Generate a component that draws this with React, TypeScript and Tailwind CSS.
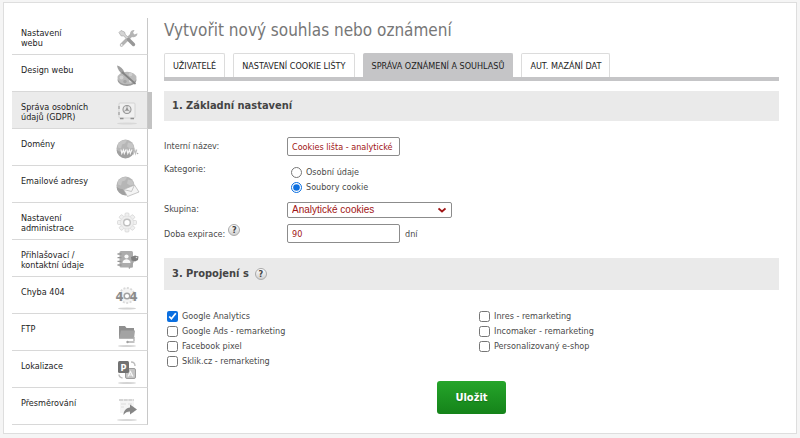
import { useState, type FormEvent, type ReactNode } from 'react';

function ToolsIcon() {
  return (
    <svg width="28" height="26" viewBox="0 0 28 26">
      <path d="M8.500 19 19 8.500" stroke="#b3b3b3" strokeWidth="3.400" strokeLinecap="round" />
      <path d="M17 7.500a4 4 0 0 1 4.500-3.500l-1.500 3 1.500 1.500 3-1.200a4 4 0 0 1-5.500 3.700z" fill="#b5b5b5" />
      <path d="M6 6.500 8 4.500l3.500 1.500.8 2.500 3.200 3.200-1.500 1.500-3.300-3.200L8 9.800z" fill="#d4d4d4" stroke="#a8a8a8" strokeWidth=".7" />
      <path d="m15.500 13.500 5 5" stroke="#989898" strokeWidth="3.400" strokeLinecap="round" />
      <circle cx="8.600" cy="18.900" r="1" fill="#eee" />
    </svg>
  );
}

function PaletteIcon() {
  return (
    <svg width="28" height="26" viewBox="0 0 28 26">
      <ellipse cx="14" cy="17" rx="9.500" ry="6" fill="#9a9a9a" />
      <ellipse cx="14" cy="15" rx="9.500" ry="6.300" fill="#bababa" />
      <circle cx="8.500" cy="14.500" r="1.900" fill="#d2d2d2" />
      <circle cx="12" cy="18.500" r="1.700" fill="#a4a4a4" />
      <circle cx="17.500" cy="11.500" r="1.800" fill="#cfcfcf" />
      <circle cx="17.500" cy="18" r="1.600" fill="#dadada" />
      <path d="M4 2.500c3 .8 6 3 7.500 7L9 11C6.500 9 4.500 6 4 2.500z" fill="#a0a0a0" />
      <path d="m9.500 9.500 12.500 11" stroke="#848484" strokeWidth="1.800" strokeLinecap="round" />
    </svg>
  );
}

function SafeIcon() {
  return (
    <svg width="28" height="26" viewBox="0 0 28 26">
      <rect x="6" y="3" width="16" height="15" rx="1" fill="#f0f0f0" stroke="#cdcdcd" strokeWidth=".8" />
      <path d="M6 6v3M6 12v3" stroke="#a5a5a5" strokeWidth="1.300" />
      <circle cx="14" cy="9.500" r="4" fill="#e6e6e6" stroke="#969696" strokeWidth="1.100" />
      <circle cx="14" cy="9.500" r="1.200" fill="#8a8a8a" />
      <path d="M14 9.500V6M14 9.500l-3 2M14 9.500l3 2" stroke="#969696" strokeWidth=".8" />
      <path d="M7 18.500h3.500M17.500 18.500H21" stroke="#8f8f8f" strokeWidth="1.300" />
      <ellipse cx="14" cy="23.500" rx="10" ry="1" fill="#d8d8d8" />
    </svg>
  );
}

function Globe() {
  return (
    <>
      <circle cx="12.500" cy="11.500" r="9" fill="#b6b6b6" />
      <path d="M5 7.500c2-4 6-5 9-4l-2 3-3 1-1 4-3-1zM15 5.500l4 1 2 4-4 1-3-2z" fill="#c6c6c6" />
      <path d="M3.500 12.500a9 9 0 0 0 18 0c-3 4-15 4-18 0z" fill="#a0a0a0" />
    </>
  );
}

function DomainIcon() {
  return (
    <svg width="28" height="26" viewBox="0 0 28 26">
      <Globe />
      <path d="m8 12.500.8 4 1.700-3.500.8 3.500 1.700-4M14 12.500l.8 4 1.700-3.500.8 3.500 1.700-4" fill="none" stroke="#f8f8f8" strokeWidth="1.100" />
      <path d="m19.800 12.500.8 4 1.200-3.500.8 3.500 1.200-4" fill="none" stroke="#c0c0c0" strokeWidth="1.100" />
      <circle cx="24.600" cy="16.500" r=".8" fill="#aaa" />
    </svg>
  );
}

function MailIcon() {
  return (
    <svg width="28" height="26" viewBox="0 0 28 26">
      <Globe />
      <path d="m10.500 15.500 11-4.500 4.500 7-11.500 4.500z" fill="#f5f5f5" stroke="#b0b0b0" strokeWidth=".7" />
      <path d="m10.500 15.500 8 2 3-6.500" fill="none" stroke="#b9b9b9" strokeWidth=".8" />
    </svg>
  );
}

const TEETH = [0, 45, 90, 135, 180, 225, 270, 315];

function GearIcon() {
  return (
    <svg width="28" height="26" viewBox="0 0 28 26">
      {TEETH.map((a) => (
        <rect key={a} x="12" y="2" width="4" height="5" rx="1" fill="#f0f0f0" stroke="#d2d2d2" strokeWidth=".7" transform={`rotate(${a} 14 11.500)`} />
      ))}
      <circle cx="14" cy="11.500" r="6.500" fill="#eee" stroke="#dcdcdc" strokeWidth=".6" />
      <circle cx="14" cy="11.500" r="3.300" fill="#fff" stroke="#c0c0c0" strokeWidth="1.400" />
    </svg>
  );
}

function ContactsIcon() {
  return (
    <svg width="28" height="26" viewBox="0 0 28 26">
      <rect x="6.500" y="3" width="13.500" height="16.500" rx="1.500" fill="#acacac" />
      <path d="M4.500 6h4M4.500 9.700h4M4.500 13.400h4M4.500 17h4" stroke="#959595" strokeWidth="1.300" />
      <circle cx="13.500" cy="8.500" r="2.100" fill="#f8f8f8" />
      <path d="M9.500 15c0-5 8-5 8 0z" fill="#f8f8f8" />
      <path d="m18 9 4-1.500 3.500 1-.5 3.500-3 1.500-3.500-1z" fill="#7e7e7e" />
      <path d="m20.500 13-4.500 7.500M17.500 18l2 1.200" stroke="#a5a5a5" strokeWidth="1.500" />
      <circle cx="23.500" cy="9.500" r=".8" fill="#e0e0e0" />
    </svg>
  );
}

function NotFoundIcon() {
  return (
    <svg width="28" height="26" viewBox="0 0 28 26">
      <circle cx="14" cy="10.500" r="7.500" fill="#f4f4f4" stroke="#dadada" strokeWidth="1.800" strokeDasharray="2 1.500" />
      <text x="2.500" y="15.500" fontSize="13" fontWeight="700" fill="#8b8b8b">4</text>
      <text x="16.500" y="15.500" fontSize="13" fontWeight="700" fill="#8b8b8b">4</text>
      <circle cx="14" cy="11" r="2.800" fill="#fff" stroke="#a2a2a2" strokeWidth="1.500" />
      <ellipse cx="14" cy="23.500" rx="9" ry="1" fill="#d4d4d4" />
    </svg>
  );
}

function FolderIcon() {
  return (
    <svg width="28" height="26" viewBox="0 0 28 26">
      <path d="M6 4h6l1.500 2H21v10.500H6z" fill="#8f8f8f" />
      <path d="M6 16.500 8 8.500h14l-1 8z" fill="#a3a3a3" />
      <path d="M14.500 20h7M21 15v4" stroke="#b0b0b0" strokeWidth="1.300" fill="none" />
      <circle cx="14.500" cy="20" r="1.200" fill="#a0a0a0" />
      <ellipse cx="14" cy="24" rx="9" ry="1" fill="#d4d4d4" />
    </svg>
  );
}

function LocaleIcon() {
  return (
    <svg width="28" height="26" viewBox="0 0 28 26">
      <rect x="12.500" y="9.500" width="10" height="10" rx="1.500" fill="#c4c4c4" stroke="#9d9d9d" />
      <path d="m15 17.500 2.500-5 2.500 5M16 16h3" stroke="#f6f6f6" strokeWidth="1.200" fill="none" />
      <rect x="5" y="2" width="11" height="12" rx="1.500" fill="#727272" />
      <text x="7.500" y="11.500" fontSize="9" fontWeight="700" fill="#fff">P</text>
      <path d="M18 3c2.500 0 4 1.500 4 4M9.500 19c-2.500-.5-3.500-1.500-3.500-3.500" stroke="#bdbdbd" strokeWidth="1.400" fill="none" />
      <ellipse cx="14" cy="24" rx="9" ry="1" fill="#d4d4d4" />
    </svg>
  );
}

function RedirectIcon() {
  return (
    <svg width="28" height="26" viewBox="0 0 28 26">
      <rect x="7" y="3" width="14" height="14" fill="#f4f4f4" />
      <path d="M6 4h15" stroke="#cacaca" strokeWidth="1.300" strokeDasharray="4 .7" />
      <path d="M8 8h5M8 11h3M15 8h4" stroke="#dcdcdc" />
      <path d="M17 8.500 24 13.500 17 18.500v-3c-3 0-4.800 1-6.500 3.500 0-4 2.500-7 6.500-7.500z" fill="#868686" />
      <ellipse cx="14" cy="24" rx="10" ry="1" fill="#d8d8d8" />
    </svg>
  );
}

const MENU: { lines: string[]; icon: ReactNode; active?: boolean }[] = [
  { lines: ['Nastavení', 'webu'], icon: <ToolsIcon /> },
  { lines: ['Design webu'], icon: <PaletteIcon /> },
  { lines: ['Správa osobních', 'údajů (GDPR)'], icon: <SafeIcon />, active: true },
  { lines: ['Domény'], icon: <DomainIcon /> },
  { lines: ['Emailové adresy'], icon: <MailIcon /> },
  { lines: ['Nastavení', 'administrace'], icon: <GearIcon /> },
  { lines: ['Přihlašovací /', 'kontaktní údaje'], icon: <ContactsIcon /> },
  { lines: ['Chyba 404'], icon: <NotFoundIcon /> },
  { lines: ['FTP'], icon: <FolderIcon /> },
  { lines: ['Lokalizace'], icon: <LocaleIcon /> },
  { lines: ['Přesměrování'], icon: <RedirectIcon /> },
];

const TABS = ['Uživatelé', 'Nastavení cookie lišty', 'Správa oznámení a souhlasů', 'Aut. mazání dat'];

const LINKS_LEFT = ['Google Analytics', 'Google Ads - remarketing', 'Facebook pixel', 'Sklik.cz - remarketing'];
const LINKS_RIGHT = ['Inres - remarketing', 'Incomaker - remarketing', 'Personalizovaný e-shop'];

function HelpButton() {
  return (
    <button
      type="button"
      aria-label="Nápověda"
      className="flex size-3 items-center justify-center rounded-full border border-[#aaa] bg-linear-to-b from-white to-[#d0d0d0] text-[9px] leading-none font-bold text-[#444]"
    >
      ?
    </button>
  );
}

function CheckList({ items, checked, onToggle }: { items: string[]; checked: string[]; onToggle: (item: string) => void }) {
  return (
    <div className="flex flex-1 flex-col gap-px">
      {items.map((item) => (
        <label key={item} className="flex h-3.5 items-center gap-1">
          <input
            type="checkbox"
            checked={checked.includes(item)}
            onChange={() => onToggle(item)}
            className="size-[11px] accent-[#0b6fe0]"
          />
          {item}
        </label>
      ))}
    </div>
  );
}

export default function App() {
  const [tab, setTab] = useState(TABS[2]);
  const [name, setName] = useState('Cookies lišta - analytické');
  const [category, setCategory] = useState('cookie');
  const [group, setGroup] = useState('analytics');
  const [days, setDays] = useState('90');
  const [checked, setChecked] = useState(['Google Analytics']);

  function toggle(item: string) {
    setChecked(checked.includes(item) ? checked.filter((c) => c !== item) : [...checked, item]);
  }

  function handleSubmit(e: FormEvent) {
    e.preventDefault();
  }

  return (
    <div className="min-h-screen bg-[#f5f5f5] px-[3px] pt-0.5 pb-1 font-['DejaVu_Sans_Condensed','DejaVu_Sans',sans-serif] text-[9px] leading-[10px] text-[#4a4a4a]">
      <div className="flex gap-3 border border-[#dedede] bg-white pt-[15px] pr-[17px] pb-2 pl-2">
        <nav className="w-[140px] shrink-0">
          {MENU.map((item) => (
            <a key={item.lines.join(' ')} href="#" className="flex h-[37px] text-[#1c1c1c]">
              <span
                className={`flex flex-1 items-start justify-between border-r border-b border-r-[#c8c8c8] border-b-[#d8d8d8] pt-2.5 pr-1.5 pl-[9px] ${item.active ? 'bg-[#ebebeb]' : ''}`}
              >
                <span className="whitespace-nowrap">
                  {item.lines.map((line) => (
                    <span key={line} className="block">{line}</span>
                  ))}
                </span>
                <span className="-mt-0.5 -ml-2 shrink-0">{item.icon}</span>
              </span>
              <span className={`w-1 ${item.active ? 'bg-[#c3c3c3]' : ''}`} />
            </a>
          ))}
        </nav>

        <main className="min-w-0 flex-1">
          <h1 className="text-[17px] leading-6 text-[#777]">Vytvořit nový souhlas nebo oznámení</h1>

          <div className="mt-[11px] flex gap-2 border-b-4 border-[#c5c5c7]">
            {TABS.map((label) => (
              <button
                key={label}
                type="button"
                onClick={() => setTab(label)}
                className={`h-6 rounded-t-xs border border-b-0 px-2 whitespace-nowrap uppercase text-[#222] ${tab === label ? 'border-[#c5c5c7] bg-[#c5c5c7]' : 'border-[#dcdcdc] bg-white'}`}
              >
                {label}
              </button>
            ))}
          </div>

          <form onSubmit={handleSubmit}>
            <h2 className="mt-2.5 flex h-[30px] items-center bg-[#eaeaea] px-2 text-[11px] font-bold text-[#444]">1. Základní nastavení</h2>

            <div className="mt-4 grid grid-cols-[123px_1fr]">
              <label htmlFor="name" className="pt-1">Interní název:</label>
              <input
                id="name"
                value={name}
                onChange={(e) => setName(e.target.value)}
                className="h-[19px] w-[113px] rounded-xs border border-[#8c8c8c] px-1 text-[#a01414] outline-none"
              />

              <span id="category" className="pt-2">Kategorie:</span>
              <div role="radiogroup" aria-labelledby="category" className="mt-[9px] flex flex-col gap-px pl-1">
                <label className="flex h-3.5 items-center gap-1">
                  <input type="radio" name="category" checked={category === 'personal'} onChange={() => setCategory('personal')} className="size-[11px] accent-[#0b6fe0]" />
                  Osobní údaje
                </label>
                <label className="flex h-3.5 items-center gap-1">
                  <input type="radio" name="category" checked={category === 'cookie'} onChange={() => setCategory('cookie')} className="size-[11px] accent-[#0b6fe0]" />
                  Soubory cookie
                </label>
              </div>

              <label htmlFor="group" className="mt-2 pt-[2px]">Skupina:</label>
              <div className="relative mt-2 w-[165px]">
                <select
                  id="group"
                  value={group}
                  onChange={(e) => setGroup(e.target.value)}
                  className="block h-4 w-full appearance-none rounded-xs border border-[#8c8c8c] bg-white px-1 font-['Liberation_Sans',Arial,sans-serif] text-[10px] leading-3 text-[#a01414] outline-none"
                >
                  <option value="analytics">Analytické cookies</option>
                </select>
                <svg className="pointer-events-none absolute top-1 right-1.5" width="8" height="8" viewBox="0 0 8 8">
                  <path d="m.5 2.500 3.500 3 3.500-3" fill="none" stroke="#a01414" strokeWidth="1.800" />
                </svg>
              </div>

              <div className="mt-1.5 flex items-start gap-[3px]">
                <label htmlFor="days" className="pt-[5px]">Doba expirace:</label>
                <HelpButton />
              </div>
              <div className="mt-1.5 flex items-center gap-[5px]">
                <input
                  id="days"
                  value={days}
                  onChange={(e) => setDays(e.target.value)}
                  className="h-[19px] w-[113px] rounded-xs border border-[#8c8c8c] px-1 text-[#a01414] outline-none"
                />
                dní
              </div>
            </div>

            <div className="mt-[15px] flex h-8 items-center gap-1.5 bg-[#eaeaea] px-2">
              <h2 className="text-[11px] font-bold text-[#444]">3. Propojení s</h2>
              <HelpButton />
            </div>

            <div className="mt-[19px] flex gap-3 pl-[3px]">
              <CheckList items={LINKS_LEFT} checked={checked} onToggle={toggle} />
              <CheckList items={LINKS_RIGHT} checked={checked} onToggle={toggle} />
            </div>

            <button
              type="submit"
              className="mx-auto mt-[13px] mb-0.5 block h-[33px] w-[69px] rounded-[3px] bg-linear-to-b from-[#25a52a] to-[#15831a] text-[11px] font-bold text-white text-shadow-xs"
            >
              Uložit
            </button>
          </form>
        </main>
      </div>
    </div>
  );
}
